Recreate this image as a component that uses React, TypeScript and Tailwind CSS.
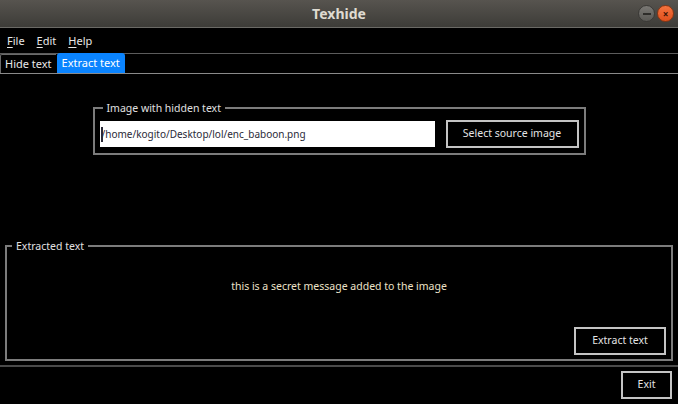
import React from 'react';

const font = { fontFamily: '"Noto Sans", "DejaVu Sans", sans-serif' };

function Mnemonic({ label }: { label: string }) {
  return (
    <span>
      <span className="underline underline-offset-2">{label[0]}</span>
      {label.slice(1)}
    </span>
  );
}

function QtButton({ children, className = '' }: { children: React.ReactNode; className?: string }) {
  return (
    <button
      className={`h-[28px] border-2 border-[#c4c4c4] bg-black text-[10.5px] text-[#e4e4e4] flex items-center justify-center ${className}`}
    >
      {children}
    </button>
  );
}

export default function App() {
  return (
    <div className="w-[678px] h-[404px] bg-black flex flex-col overflow-hidden" style={font}>
      {/* title bar */}
      <div className="h-[28px] shrink-0 relative flex items-center justify-center bg-gradient-to-b from-[#57544f] to-[#3d3c38] border-b border-[#6b6a66]">
        <span className="text-[14px] font-bold text-[#dfdbd2]">Texhide</span>
        <div className="absolute right-[4px] top-[5px] flex gap-[2px]">
          <div className="w-[17px] h-[17px] rounded-full bg-gradient-to-b from-[#7a7874] to-[#5a5955] border border-[#3a3936] flex items-center justify-center">
            <div className="w-[8px] h-[2px] bg-[#2e2d2a]" />
          </div>
          <div className="w-[17px] h-[17px] rounded-full bg-gradient-to-b from-[#f4733e] to-[#e0501c] border border-[#8a3512] flex items-center justify-center text-[10px] font-bold leading-none text-[#3a1406]">
            ×
          </div>
        </div>
      </div>

      {/* menu bar */}
      <div className="h-[26px] shrink-0 flex items-center gap-[12px] pl-[7px] pt-[2px] text-[11px] text-[#e8e8e8] border-b border-[#5c5c5c]">
        <Mnemonic label="File" />
        <Mnemonic label="Edit" />
        <Mnemonic label="Help" />
      </div>

      {/* tabs */}
      <div className="h-[20px] shrink-0 flex items-end border-b border-[#8a8a8a] text-[11px]">
        <div className="h-[19px] px-[4px] pt-[1px] flex items-center text-[#e8e8e8] border-t border-l border-[#6a6a6a] rounded-tl-[2px]">
          Hide text
        </div>
        <div className="h-[20px] ml-[1px] px-[5px] pt-[1px] flex items-center text-white bg-[#0a84ff] rounded-t-[3px]">
          Extract text
        </div>
      </div>

      {/* body */}
      <div className="flex-1 flex flex-col">
        <div className="pt-[27px] flex justify-center">
          <fieldset className="w-[491px] h-[54px] border-2 border-[#7c7c7c] px-[5px] flex items-center gap-[11px]">
            <legend className="ml-[3px] px-[4px] text-[10.5px] text-[#e0e0e0] leading-[14px]">Image with hidden text</legend>
            <div className="w-[335px] h-[26px] bg-white flex items-center pl-[1px] text-[10px] text-[#2a2a38]">
              <span className="w-[2px] h-[15px] bg-[#2a2a38] mr-[-1px]" />
              /home/kogito/Desktop/lol/enc_baboon.png
            </div>
            <QtButton className="w-[133px] mt-[-1px]">Select source image</QtButton>
          </fieldset>
        </div>

        <div className="mt-[84px] px-[5px]">
          <fieldset className="h-[122px] border-2 border-[#7c7c7c] flex flex-col">
            <legend className="ml-[5px] px-[4px] text-[10.5px] text-[#e0e0e0] leading-[14px]">Extracted text</legend>
            <div className="pt-[26px] text-center text-[10.5px] text-[#ece2c8]">
              this is a secret message added to the image
            </div>
            <div className="mt-auto mb-[4px] mr-[5px] flex justify-end">
              <QtButton className="w-[92px]">Extract text</QtButton>
            </div>
          </fieldset>
        </div>

        <div className="mt-[4px] border-t-2 border-[#4a4a4a]" />
        <div className="flex justify-end pr-[6px] pt-[4px]">
          <QtButton className="w-[51px]">Exit</QtButton>
        </div>
      </div>
    </div>
  );
}
